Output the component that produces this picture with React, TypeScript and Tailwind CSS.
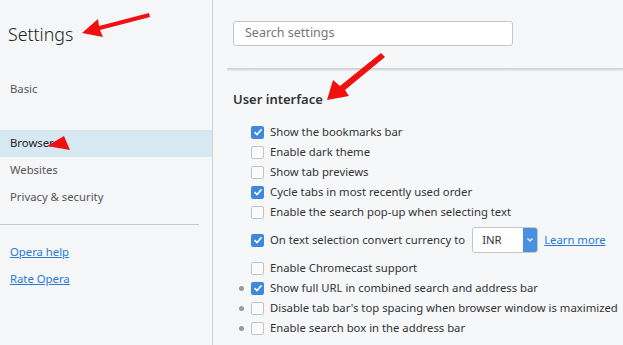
import React from 'react';

const font = { fontFamily: '"Noto Sans", "Open Sans", sans-serif' };

type Row = { label: string; checked: boolean; dot?: boolean; select?: boolean };

const ROWS: Row[] = [
  { label: 'Show the bookmarks bar', checked: true },
  { label: 'Enable dark theme', checked: false },
  { label: 'Show tab previews', checked: false },
  { label: 'Cycle tabs in most recently used order', checked: true },
  { label: 'Enable the search pop-up when selecting text', checked: false },
  { label: 'On text selection convert currency to', checked: true, select: true },
  { label: 'Enable Chromecast support', checked: false },
  { label: 'Show full URL in combined search and address bar', checked: true, dot: true },
  { label: "Disable tab bar's top spacing when browser window is maximized", checked: false, dot: true },
  { label: 'Enable search box in the address bar', checked: false, dot: true },
];

function Checkbox({ checked }: { checked: boolean }) {
  if (checked) {
    return (
      <span className="w-[13px] h-[13px] rounded-[2px] bg-[#3f88dc] flex items-center justify-center shrink-0">
        <svg width="10" height="10" viewBox="0 0 10 10">
          <path d="M1.5 5.2 L4 7.6 L8.6 2.2" fill="none" stroke="white" strokeWidth="1.6" />
        </svg>
      </span>
    );
  }
  return <span className="w-[13px] h-[13px] rounded-[2px] border border-[#c4c4c4] bg-[#fbfbfb] shrink-0" />;
}

function SideItem({ label, active }: { label: string; active?: boolean }) {
  return (
    <div className={`h-[27px] flex items-center pl-[10px] text-[11.3px] ${active ? 'bg-[#d6e8f2] text-[#222]' : 'text-[#555]'}`}>
      {label}
    </div>
  );
}

export default function App() {
  return (
    <div className="relative w-[623px] h-[345px] overflow-hidden flex bg-[#f6f7f9]" style={font}>
      {/* Sidebar */}
      <div className="w-[213px] shrink-0 bg-[#f5f6f8] border-r border-[#d2d2d2] flex flex-col">
        <div className="h-[76px] pl-[8px] pt-[21px] text-[17.8px] font-light text-[#222] leading-[26px]">Settings</div>
        <SideItem label="Basic" />
        <div className="h-[27px]" />
        <SideItem label="Browser" active />
        <SideItem label="Websites" />
        <SideItem label="Privacy & security" />
        <div className="mt-[13px] mr-[13px] border-t border-[#c8c8c8]" />
        <div className="mt-[14px] flex flex-col text-[11.3px]">
          <div className="h-[27px] flex items-center pl-[10px] text-[#2a7ad6] underline">Opera help</div>
          <div className="h-[27px] flex items-center pl-[10px] text-[#2a7ad6] underline">Rate Opera</div>
        </div>
      </div>

      {/* Main */}
      <div className="flex-1 flex flex-col">
        <div className="h-[68px] pt-[21px] pl-[20px]">
          <div className="w-[280px] h-[25px] bg-white border border-[#c6c6c6] rounded-[3px] flex items-center pl-[11px] text-[12.5px] text-[#777]">
            Search settings
          </div>
        </div>
        <div className="ml-[14px] h-[3px] bg-gradient-to-b from-[#c9c9c9] to-[#eeeeee]" />
        <div className="pl-[20px] pt-[19px] text-[13px] font-semibold text-[#333] leading-[18px]">User interface</div>
        <div className="mt-[14px] flex flex-col text-[11.3px] text-[#333]">
          {ROWS.map((r) => (
            <div key={r.label} className={`relative flex items-center pl-[38px] gap-[6px] ${r.select ? 'h-[36px]' : 'h-[20px]'}`}>
              {r.dot && <span className="absolute left-[26px] w-[5px] h-[5px] rounded-full bg-[#9a9a9a]" />}
              <Checkbox checked={r.checked} />
              <span className="whitespace-nowrap">{r.label}</span>
              {r.select && (
                <div className="flex items-center gap-[6px] ml-[1px]">
                  <div className="w-[66px] h-[26px] bg-white border border-[#c6c6c6] rounded-[3px] flex overflow-hidden">
                    <span className="flex-1 flex items-center pl-[9px]">INR</span>
                    <span className="w-[14px] bg-[#4a90e2] flex items-center justify-center">
                      <svg width="8" height="6" viewBox="0 0 8 6">
                        <path d="M1.5 1.5 L4 4 L6.5 1.5" fill="none" stroke="white" strokeWidth="1.2" />
                      </svg>
                    </span>
                  </div>
                  <span className="text-[#2a7ad6] underline">Learn more</span>
                </div>
              )}
            </div>
          ))}
        </div>
      </div>

      {/* Annotation arrows */}
      <svg className="absolute left-0 top-0 pointer-events-none" width="623" height="345" viewBox="0 0 623 345">
        <g fill="#f01010" stroke="none">
          <path d="M149 13 L150 17 L100 30 L103 37 L82 33 L98 19 L99 26 Z" />
          <path d="M47 146 L64 136 L70 150 Z" />
          <path d="M381 53 L385 57 L345 90 L349 96 L327 100 L333 80 L340 86 Z" />
        </g>
      </svg>
    </div>
  );
}
